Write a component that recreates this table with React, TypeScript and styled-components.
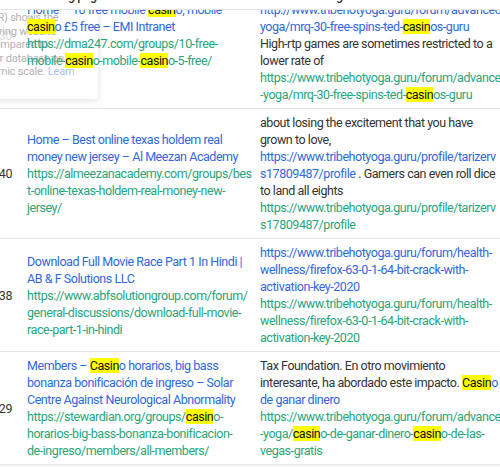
import React from "react";
import styled, { createGlobalStyle } from "styled-components";

const GlobalStyle = createGlobalStyle`
  html, body { margin: 0; padding: 0; background: #ffffff; }
  body { overflow: hidden; font-family: Roboto, "Liberation Sans", Arial, sans-serif; }
`;

const Viewport = styled.div`
  position: relative;
  z-index: 0;
  width: 500px;
  height: 467px;
  overflow: hidden;
  background: #fff;
  color: #333;
  font-size: 12.5px;
  letter-spacing: -0.45px;
`;

const HeaderBar = styled.div`
  position: absolute;
  top: 0;
  left: 0;
  right: 0;
  height: 9px;
  background: #fff;
  border-bottom: 1px solid #e4e4e4;
  z-index: 3;
  overflow: hidden;
`;

const HeaderInner = styled.div`
  display: grid;
  grid-template-columns: 27px 233px 260px;
  margin-top: -13px;
  line-height: 17px;
  font-weight: 500;
  color: #333;
`;

const HeaderCell = styled.div`
  white-space: nowrap;
`;

const Table = styled.div`
  display: flex;
  flex-direction: column;
  margin-top: -38px;
`;

const Row = styled.div<{ $shade?: boolean }>`
  display: grid;
  grid-template-columns: 27px 233px 260px;
  padding: 5px 0;
  border-bottom: 1px solid #e6e6e6;
  background: ${(p) => (p.$shade ? "#f4f4f4" : "#fff")};
  min-height: 20px;
`;

const NumCell = styled.div`
  align-self: center;
  text-align: right;
  padding-right: 15px;
  line-height: 17px;
  white-space: nowrap;
  direction: rtl;
`;

const PageCell = styled.div`
  position: relative;
  z-index: 2;
  align-self: center;
  padding-right: 11px;
`;

const AnchorCell = styled.div`
  position: relative;
  z-index: 2;
  align-self: start;
`;

const Line = styled.div`
  display: block;
  white-space: nowrap;
  line-height: 17px;
`;

const Blue = styled.span`
  color: #3068dc;
`;

const Green = styled.span`
  color: #28a57a;
`;

const Dark = styled.span`
  color: #333;
`;

const Mark = styled.mark`
  background: #ffff00;
  color: #111;
`;

const Tooltip = styled.div`
  position: absolute;
  left: -93px;
  top: 3px;
  width: 175px;
  height: 80px;
  padding: 8px;
  background: rgba(255, 255, 255, 0.82);
  box-shadow: 0 1px 6px rgba(0, 0, 0, 0.14);
  border-radius: 2px;
  z-index: 1;
  font-size: 11px;
  letter-spacing: -0.2px;
  color: #b3b3b3;
`;

const TipLine = styled.div`
  white-space: nowrap;
  line-height: 13.5px;
`;

const TipLink = styled.span`
  color: #a9c0f0;
`;

export default function App() {
  return (
    <>
      <GlobalStyle />
      <Viewport>
        <HeaderBar>
          <HeaderInner>
            <HeaderCell />
            <HeaderCell>Referring page</HeaderCell>
            <HeaderCell>Anchor and target URL</HeaderCell>
          </HeaderInner>
        </HeaderBar>

        <Tooltip>
          <TipLine>Domain Rating (DR) shows the</TipLine>
          <TipLine>strength of a referring website</TipLine>
          <TipLine>backlink profile compared to</TipLine>
          <TipLine>to the others in our database on a</TipLine>
          <TipLine>
            100-point logarithmic scale. <TipLink>Learn</TipLink>
          </TipLine>
          <TipLine>
            <TipLink>more</TipLink>
          </TipLine>
        </Tooltip>

        <Table>
          <Row>
            <NumCell>30</NumCell>
            <PageCell>
              <Line>
                <Blue>
                  Home – 10 free mobile <Mark>casin</Mark>o, mobile
                </Blue>
              </Line>
              <Line>
                <Blue>
                  <Mark>casin</Mark>o £5 free – EMI Intranet
                </Blue>
              </Line>
              <Line>
                <Green>https://dma247.com/groups/10-free-</Green>
              </Line>
              <Line>
                <Green>
                  mobile-<Mark>casin</Mark>o-mobile-<Mark>casin</Mark>o-5-free/
                </Green>
              </Line>
            </PageCell>
            <AnchorCell>
              <Line>
                <Dark>Players who want to try free slot machines</Dark>
              </Line>
              <Line>
                <Dark>can read the complete review at</Dark>
              </Line>
              <Line>
                <Blue>http://www.tribehotyoga.guru/forum/advanced-</Blue>
              </Line>
              <Line>
                <Blue>
                  yoga/mrq-30-free-spins-ted-<Mark>casin</Mark>os-guru
                </Blue>
              </Line>
              <Line>
                <Dark>High-rtp games are sometimes restricted to a</Dark>
              </Line>
              <Line>
                <Dark>lower rate of</Dark>
              </Line>
              <Line>
                <Green>https://www.tribehotyoga.guru/forum/advanced</Green>
              </Line>
              <Line>
                <Green>
                  -yoga/mrq-30-free-spins-ted-<Mark>casin</Mark>os-guru
                </Green>
              </Line>
            </AnchorCell>
          </Row>

          <Row>
            <NumCell>40</NumCell>
            <PageCell>
              <Line>
                <Blue>Home – Best online texas holdem real</Blue>
              </Line>
              <Line>
                <Blue>money new jersey – Al Meezan Academy</Blue>
              </Line>
              <Line>
                <Green>https://almeezanacademy.com/groups/bes</Green>
              </Line>
              <Line>
                <Green>t-online-texas-holdem-real-money-new-</Green>
              </Line>
              <Line>
                <Green>jersey/</Green>
              </Line>
            </PageCell>
            <AnchorCell>
              <Line>
                <Dark>about losing the excitement that you have</Dark>
              </Line>
              <Line>
                <Dark>grown to love,</Dark>
              </Line>
              <Line>
                <Blue>https://www.tribehotyoga.guru/profile/tarizerv</Blue>
              </Line>
              <Line>
                <Blue>s17809487/profile</Blue>
                <Dark> . Gamers can even roll dice</Dark>
              </Line>
              <Line>
                <Dark>to land all eights</Dark>
              </Line>
              <Line>
                <Green>https://www.tribehotyoga.guru/profile/tarizerv</Green>
              </Line>
              <Line>
                <Green>s17809487/profile</Green>
              </Line>
            </AnchorCell>
          </Row>

          <Row>
            <NumCell>38</NumCell>
            <PageCell>
              <Line>
                <Blue>Download Full Movie Race Part 1 In Hindi |</Blue>
              </Line>
              <Line>
                <Blue>AB &amp; F Solutions LLC</Blue>
              </Line>
              <Line>
                <Green>https://www.abfsolutiongroup.com/forum/</Green>
              </Line>
              <Line>
                <Green>general-discussions/download-full-movie-</Green>
              </Line>
              <Line>
                <Green>race-part-1-in-hindi</Green>
              </Line>
            </PageCell>
            <AnchorCell>
              <Line>
                <Blue>https://www.tribehotyoga.guru/forum/health-</Blue>
              </Line>
              <Line>
                <Blue>wellness/firefox-63-0-1-64-bit-crack-with-</Blue>
              </Line>
              <Line>
                <Blue>activation-key-2020</Blue>
              </Line>
              <Line>
                <Green>https://www.tribehotyoga.guru/forum/health-</Green>
              </Line>
              <Line>
                <Green>wellness/firefox-63-0-1-64-bit-crack-with-</Green>
              </Line>
              <Line>
                <Green>activation-key-2020</Green>
              </Line>
            </AnchorCell>
          </Row>

          <Row>
            <NumCell>29</NumCell>
            <PageCell>
              <Line>
                <Blue>
                  Members – <Mark>Casin</Mark>o horarios, big bass
                </Blue>
              </Line>
              <Line>
                <Blue>bonanza bonificación de ingreso – Solar</Blue>
              </Line>
              <Line>
                <Blue>Centre Against Neurological Abnormality</Blue>
              </Line>
              <Line>
                <Green>
                  https://stewardian.org/groups/<Mark>casin</Mark>o-
                </Green>
              </Line>
              <Line>
                <Green>horarios-big-bass-bonanza-bonificacion-</Green>
              </Line>
              <Line>
                <Green>de-ingreso/members/all-members/</Green>
              </Line>
            </PageCell>
            <AnchorCell>
              <Line>
                <Dark>Tax Foundation. En otro movimiento</Dark>
              </Line>
              <Line>
                <Dark>interesante, ha abordado este impacto. </Dark>
                <Blue>
                  <Mark>Casin</Mark>o
                </Blue>
              </Line>
              <Line>
                <Blue>de ganar dinero</Blue>
              </Line>
              <Line>
                <Green>https://www.tribehotyoga.guru/forum/advanced</Green>
              </Line>
              <Line>
                <Green>
                  -yoga/<Mark>casin</Mark>o-de-ganar-dinero-<Mark>casin</Mark>o-de-las-
                </Green>
              </Line>
              <Line>
                <Green>vegas-gratis</Green>
              </Line>
            </AnchorCell>
          </Row>

          <Row $shade>
            <NumCell />
            <PageCell />
            <AnchorCell />
          </Row>
        </Table>
      </Viewport>
    </>
  );
}
